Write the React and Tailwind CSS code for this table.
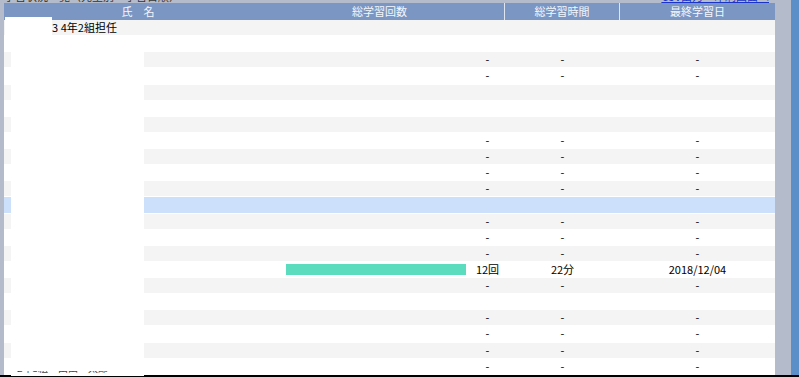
const rows = [
  { kind: 'first' },
  { kind: 'empty' },
  { kind: 'dash' },
  { kind: 'dash' },
  { kind: 'empty' },
  { kind: 'empty' },
  { kind: 'empty' },
  { kind: 'dash' },
  { kind: 'dash' },
  { kind: 'dash' },
  { kind: 'dash' },
  { kind: 'selected' },
  { kind: 'dash' },
  { kind: 'dash' },
  { kind: 'dash' },
  { kind: 'data', count: '12回', time: '22分', date: '2018/12/04', bar: 180 },
  { kind: 'dash' },
  { kind: 'empty' },
  { kind: 'dash' },
  { kind: 'dash' },
  { kind: 'dash' },
  { kind: 'dash', last: true },
]

function rowBg(row, i) {
  if (row.kind === 'selected') return 'bg-[#cde0fb]'
  return i % 2 === 0 ? 'bg-[#f4f4f4]' : 'bg-white'
}

function Row({ row, index }) {
  const showDash = row.kind === 'dash'
  const isData = row.kind === 'data'

  return (
    <div className={`flex h-[16.14px] shrink-0 items-center border-b border-white ${rowBg(row, index)}`}>
      <div className="flex h-full w-[140px] shrink-0 items-center">
        {row.kind === 'first' ? (
          <span className="pl-[42px] whitespace-nowrap text-black">13 4年2組担任</span>
        ) : (
          <>
            <div className="h-full w-[7px] shrink-0" />
            <div className="flex h-[17px] w-[133px] flex-col self-start bg-white">
              {row.last && (
                <>
                  <div className="h-[12px] shrink-0" />
                  <div className="h-[2px] overflow-hidden pl-[6px]">
                    <div className="-mt-[8px] whitespace-nowrap text-[10px] leading-[10px] text-[#444]">
                      2年3組　山田　太郎
                    </div>
                  </div>
                </>
              )}
            </div>
          </>
        )}
      </div>
      <div className="w-[111px] shrink-0" />
      <div className="flex w-[215px] shrink-0 items-center pl-[31px]">
        {isData && <div className="h-[11px] bg-[#5bdcbf]" style={{ width: row.bar }} />}
      </div>
      <div className="w-[35px] shrink-0 text-center">{showDash ? '-' : isData ? row.count : ''}</div>
      <div className="w-[115px] shrink-0 text-center">{showDash ? '-' : isData ? row.time : ''}</div>
      <div className="w-[155px] shrink-0 text-center">{showDash ? '-' : isData ? row.date : ''}</div>
    </div>
  )
}

export default function App() {
  return (
    <div
      className="relative h-[377px] w-[799px] overflow-hidden bg-[#b4bbcb] text-[11px] leading-none text-black"
      style={{ fontFamily: '"Noto Sans CJK JP", "Noto Sans", sans-serif' }}
    >
      <div className="flex h-[375px]">
        <div className="w-[4px] shrink-0" />
        <div className="flex w-[771px] shrink-0 flex-col">
          {/* cut-off line above the table */}
          <div className="flex h-[3px] shrink-0 overflow-hidden">
            <div className="-mt-[10px] whitespace-nowrap text-[11px] leading-[12px] text-[#333]">
              学習状況一覧（先生別・学習日順）
            </div>
            <div className="-mt-[10px] ml-auto whitespace-nowrap pr-[6px] text-[11px] leading-[12px] text-[#1a33c8] underline">
              CSV出力・印刷画面へ
            </div>
          </div>
          {/* header */}
          <div className="flex h-[17px] shrink-0 items-center bg-[#7b96c3] text-[#f4f7fc]">
            <div className="w-[251px] shrink-0 pl-[17px] text-center">氏　名</div>
            <div className="flex h-full w-[250px] shrink-0 items-center justify-center border-r border-[#dfe6f2]">
              総学習回数
            </div>
            <div className="flex h-full w-[115px] shrink-0 items-center justify-center border-r border-[#dfe6f2]">
              総学習時間
            </div>
            <div className="w-[155px] shrink-0 text-center">最終学習日</div>
          </div>
          {/* rows */}
          <div className="flex flex-col">
            {rows.map((row, i) => (
              <Row key={i} row={row} index={i} />
            ))}
          </div>
        </div>
        <div className="w-[16px] shrink-0" />
        <div className="w-[8px] shrink-0 bg-[#5a8fc8]" />
      </div>
      <div className="h-[2px] bg-black" />
      {/* redaction over the first name */}
      <div className="absolute left-[5px] top-[17px] h-[19px] w-[47px] bg-white" />
    </div>
  )
}
